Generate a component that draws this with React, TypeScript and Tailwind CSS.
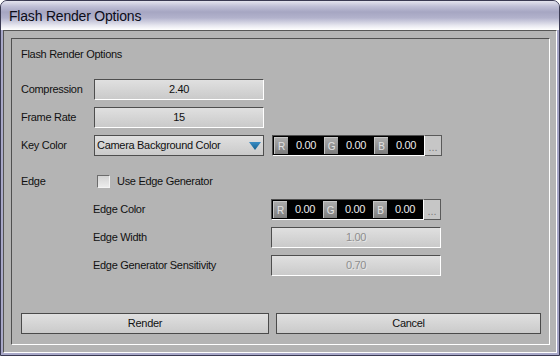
import React, { Fragment } from "react";

const fieldCls =
  "h-[21px] w-[170px] flex items-center justify-center border border-[#4e4e4e] border-r-white border-b-white bg-linear-to-b from-[#e0e0e0] to-[#cacaca]";

function Field({ value, disabled }: { value: string; disabled?: boolean }) {
  return (
    <div className={fieldCls}>
      <span className={disabled ? "text-[#8e8e8e] [text-shadow:1px_1px_0_#e6e6e6]" : "text-[#111]"}>{value}</span>
    </div>
  );
}

function ColorBox() {
  return (
    <div className="flex h-[21px] w-[170px]">
      <div className="flex flex-1 border border-[#4e4e4e] border-r-white border-b-white bg-black pl-[1px]">
        {["R", "G", "B"].map((c) => (
          <Fragment key={c}>
            <div className="my-[1px] w-[14px] flex items-center justify-center border-t border-l border-[#c6c6c6] bg-linear-to-b from-[#acacac] to-[#7c7c7c] text-[10px] text-[#e2e2e2]">
              {c}
            </div>
            <div className="w-[36px] flex items-center justify-center text-[#ececec]">0.00</div>
          </Fragment>
        ))}
      </div>
      <div className="w-[17px] flex items-center justify-center pt-[3px] border border-l-0 border-[#5a5a5a] bg-[#c6c6c6] text-[11px] tracking-[0px] text-[#7e7e7e]">
        ...
      </div>
    </div>
  );
}

function Row({ label, children, labelW = "w-[73px]" }: { label: string; children: React.ReactNode; labelW?: string }) {
  return (
    <div className="flex h-[21px] items-center">
      <div className={labelW + " shrink-0 text-[#111]"}>{label}</div>
      {children}
    </div>
  );
}

export default function App() {
  return (
    <div className="w-[560px] h-[356px] flex flex-col border border-[#3a3a52] rounded-t-[7px] overflow-hidden font-['Liberation_Sans',Arial,sans-serif] text-[11px] tracking-[-0.3px] bg-[#b0b0cc]">
      <div className="h-[29px] shrink-0 flex items-center pl-[8px] pt-[1px] bg-[linear-gradient(180deg,#e4e4ee_0%,#c0c0d6_18%,#a6a6c2_38%,#b2b2cc_58%,#e8e8f0_85%,#ffffff_100%)]">
        <span className="text-[14px] tracking-[-0.2px] text-[#0c0c18]">Flash Render Options</span>
      </div>
      <div className="flex-1 flex flex-col px-[2px] pb-[2px] bg-[#a8a8c8]">
        <div className="flex-1 flex flex-col border border-[#555] border-r-white border-b-white bg-[#b4b4b4] pt-[7px] pb-[7px] pl-[7px] pr-[6px]">
          <div className="flex-1 flex flex-col border border-[#505050] border-r-white border-b-white pl-[9px] pr-[8px]">
            <div className="pt-[8px] h-[22px] leading-[14px] text-[#111]">Flash Render Options</div>
            <div className="mt-[18px] flex flex-col gap-[7px]">
              <Row label="Compression">
                <Field value="2.40" />
              </Row>
              <Row label="Frame Rate">
                <Field value="15" />
              </Row>
              <Row label="Key Color">
                <div className="h-[21px] w-[170px] flex items-center justify-between border border-[#4e4e4e] bg-linear-to-b from-[#e0e0e0] to-[#cacaca] pl-[2px] pr-[2px] text-[#111]">
                  <span>Camera Background Color</span>
                  <svg width="12" height="8" viewBox="0 0 12 8">
                    <defs>
                      <linearGradient id="tri" x1="0" y1="0" x2="0" y2="1">
                        <stop offset="0" stopColor="#3a8cc4" />
                        <stop offset="1" stopColor="#14608e" />
                      </linearGradient>
                    </defs>
                    <polygon points="0,0 12,0 6,8" fill="url(#tri)" />
                  </svg>
                </div>
                <div className="ml-[8px]">
                  <ColorBox />
                </div>
              </Row>
            </div>
            <div className="mt-[15px] flex flex-col gap-[7px]">
              <Row label="Edge">
                <div className="ml-[3px] w-[13px] h-[13px] border border-[#6c6c6c] border-r-[#f4f4f4] border-b-[#f4f4f4] bg-linear-to-b from-[#d4d4d4] to-[#ececec]" />
                <span className="ml-[7px] text-[#111]">Use Edge Generator</span>
              </Row>
              <div className="pl-[72px] flex flex-col gap-[7px]">
                <Row label="Edge Color" labelW="w-[178px]">
                  <ColorBox />
                </Row>
                <Row label="Edge Width" labelW="w-[178px]">
                  <Field value="1.00" disabled />
                </Row>
                <Row label="Edge Generator Sensitivity" labelW="w-[178px]">
                  <Field value="0.70" disabled />
                </Row>
              </div>
            </div>
            <div className="flex-1" />
            <div className="flex gap-[7px] mb-[10px]">
              <button className="w-[248px] h-[21px] flex items-center justify-center border border-[#4a4a4a] bg-linear-to-b from-[#e0e0e0] to-[#cacaca] text-[#111]">
                Render
              </button>
              <button className="flex-1 h-[21px] flex items-center justify-center border border-[#4a4a4a] bg-linear-to-b from-[#e0e0e0] to-[#cacaca] text-[#111]">
                Cancel
              </button>
            </div>
          </div>
        </div>
      </div>
    </div>
  );
}
